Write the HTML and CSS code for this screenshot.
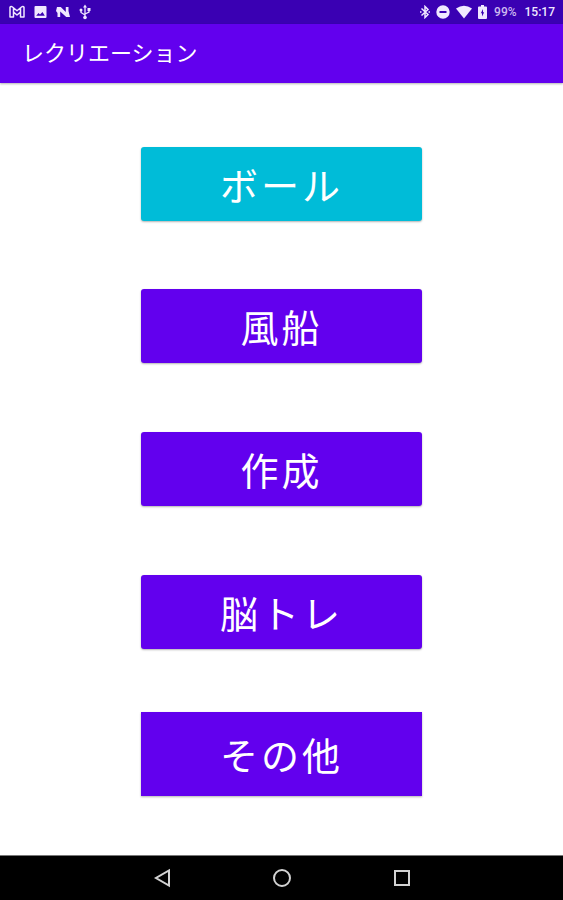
FILE: index.html
```html
<!DOCTYPE html>
<html lang="ja">
<head>
<meta charset="utf-8">
<meta name="viewport" content="width=device-width, initial-scale=1">
<title>レクリエーション</title>
<link rel="stylesheet" href="styles.css">
</head>
<body>
<div class="status-bar">
  <div class="status-group status-group--apps">
    <svg width="16" height="14" viewBox="0 0 16 14" fill="none" stroke="currentColor" stroke-width="1.500" stroke-linejoin="round" aria-hidden="true"><path d="M1 2.200Q2 .8 3.500 2L8 5.800 12.500 2Q14 .8 15 2.200V12H11.500V7.200L8 10 4.500 7.200V12H1ZM4.500 7.200V3M11.500 7.200V3"/></svg>
    <svg width="13" height="14" viewBox="0 0 13 14" aria-hidden="true"><path fill="currentColor" fill-rule="evenodd" d="M1.500 1h10a1 1 0 0 1 1 1v10a1 1 0 0 1-1 1h-10a1 1 0 0 1-1-1V2a1 1 0 0 1 1-1ZM2.200 10.800h8.600L8.500 7 6 9.500 4.500 8Z"/></svg>
    <svg width="14" height="14" viewBox="0 0 14 14" fill="currentColor" aria-hidden="true"><path d="M1 2h3.800l5 5V2h2.700v4L14 12h-3.800L4.200 6.500V12H1.500V8L0 6Z"/></svg>
    <svg width="12" height="16" viewBox="0 0 12 16" fill="none" stroke="currentColor" stroke-width="1.300" aria-hidden="true"><path d="M6 3v10M2 6v2.500L6 11M10 5.500V8L6 10"/><path fill="currentColor" stroke="none" d="m6 .5 2 3H4ZM8.500 4h3v3h-3Z"/><circle cx="2" cy="6" r="1.500" fill="currentColor" stroke="none"/><circle cx="6" cy="13.500" r="1.800" fill="currentColor" stroke="none"/></svg>
  </div>
  <div class="status-group status-group--system">
    <svg width="10" height="14" viewBox="0 0 10 14" fill="none" stroke="currentColor" stroke-width="1.500" aria-hidden="true"><path d="m1.500 3.500 6.500 6L5 12.500v-11l3 3-6.500 6"/><path fill="currentColor" stroke="none" d="M0 6.200h1.500v1.600H0ZM8.500 6.200H10v1.600H8.500Z"/></svg>
    <svg width="14" height="14" viewBox="0 0 14 14" aria-hidden="true"><path fill="currentColor" fill-rule="evenodd" d="M7 .3a6.700 6.700 0 1 1 0 13.400A6.700 6.700 0 0 1 7 .3ZM3.500 6v2h7V6Z"/></svg>
    <svg width="16" height="14" viewBox="0 0 16 14" fill="currentColor" aria-hidden="true"><path d="M0 3.500Q8-2 16 3.500L8 13.500Z"/></svg>
    <svg class="battery" width="9" height="14" viewBox="0 0 9 14" aria-hidden="true"><path fill="currentColor" fill-rule="evenodd" d="M3 0h3v1.500h2a1 1 0 0 1 1 1V13a1 1 0 0 1-1 1H1a1 1 0 0 1-1-1V2.500a1 1 0 0 1 1-1h2ZM5 4 2.800 8.300H4v3.200L6.200 7.200H5Z"/></svg>
    <span class="battery-level">99%</span>
    <time class="clock">15:17</time>
  </div>
</div>
<header class="app-bar"><h1>レクリエーション</h1></header>
<main class="menu">
  <div class="menu-item"><button class="menu-button menu-button--active" type="button">ボール</button></div>
  <div class="menu-item"><button class="menu-button" type="button">風船</button></div>
  <div class="menu-item"><button class="menu-button" type="button">作成</button></div>
  <div class="menu-item"><button class="menu-button" type="button">脳トレ</button></div>
  <div class="menu-item menu-item--full"><button class="menu-button" type="button">その他</button></div>
</main>
<nav class="nav-bar">
  <button type="button" aria-label="戻る"><svg width="20" height="20" viewBox="0 0 20 20"><path d="M17 2.500v15L4 10Z"/></svg></button>
  <button type="button" aria-label="ホーム"><svg width="20" height="20" viewBox="0 0 20 20"><circle cx="10" cy="10" r="8"/></svg></button>
  <button type="button" aria-label="最近使ったアプリ"><svg width="20" height="20" viewBox="0 0 20 20"><path d="M3 3h14v14H3Z"/></svg></button>
</nav>
</body>
</html>
```

FILE: styles.css
```css
* {
  box-sizing: border-box;
}

body {
  display: flex;
  flex-direction: column;
  min-height: 100vh;
  margin: 0;
  background: #fff;
  color: #fff;
  font-family: Roboto, "Noto Sans CJK JP", sans-serif;
}

.status-bar {
  display: flex;
  justify-content: space-between;
  align-items: center;
  height: 24px;
  padding: 0 8px;
  background: #3a00b3;
  color: #f0e8ff;
}

.status-group {
  display: flex;
  align-items: center;
}

.status-group--apps {
  gap: 9px;
  padding-left: 1px;
}

.status-group--system {
  gap: 6px;
  font-size: 12px;
  font-weight: 500;
  line-height: 16px;
}

.battery {
  margin-right: 1px;
}

.battery-level {
  color: #cdb9f0;
}

.clock {
  margin-left: 2px;
}

.app-bar {
  position: relative;
  display: flex;
  align-items: center;
  height: 59px;
  padding: 0 22px;
  background: #6200ee;
  box-shadow: 0 1px 2px rgba(0, 0, 0, 0.3);
}

.app-bar h1 {
  margin: 0;
  font-size: 22px;
  font-weight: 400;
  line-height: 33px;
}

.menu {
  flex: 1;
  display: flex;
  flex-direction: column;
  justify-content: space-evenly;
  align-items: center;
}

.menu-item {
  display: flex;
  width: 50%;
  height: 84px;
  padding: 5px 0;
}

.menu-item--full {
  padding: 0;
}

.menu-button {
  flex: 1;
  padding: 0;
  border: 0;
  border-radius: 3px;
  background: #6200ee;
  box-shadow: 0 1px 2px rgba(0, 0, 0, 0.3);
  color: #fff;
  font: 400 38px/56px "Noto Sans CJK JP", sans-serif;
  letter-spacing: 3px;
}

.menu-item--full .menu-button {
  border-radius: 0;
}

.menu-button--active {
  background: #00bcd8;
}

.nav-bar {
  display: flex;
  justify-content: center;
  align-items: center;
  gap: 72px;
  height: 45px;
  border-top: 1px solid #777;
  background: #000;
}

.nav-bar button {
  display: flex;
  justify-content: center;
  align-items: center;
  width: 48px;
  height: 44px;
  padding: 0;
  border: 0;
  background: none;
}

.nav-bar svg {
  fill: none;
  stroke: #d2d2d2;
  stroke-width: 2;
}
```
